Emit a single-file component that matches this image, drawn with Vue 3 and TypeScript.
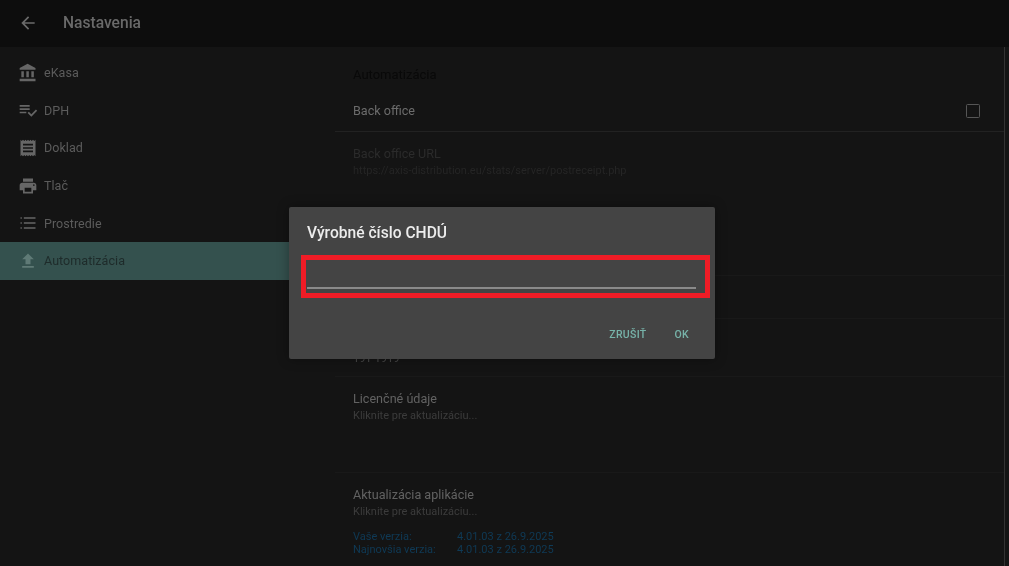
<script setup lang="ts">
interface NavItem { label: string; icon: string; active?: boolean }
const nav: NavItem[] = [
  { label: 'eKasa', icon: 'M4 10v7h3v-7H4zm6 0v7h3v-7h-3zM2 22h19v-3H2v3zm14-12v7h3v-7h-3zm-4.5-9L2 6v2h19V6l-9.5-5z' },
  { label: 'DPH', icon: 'M14 10H2v2h12v-2zm0-4H2v2h12V6zM2 16h8v-2H2v2zm19.5-4.5L23 13l-6.99 7-4.51-4.5L13 14l3.01 3 5.49-5.5z' },
  { label: 'Doklad', icon: 'M18 17H6v-2h12v2zm0-4H6v-2h12v2zm0-4H6V7h12v2zM3 22l1.5-1.5L6 22l1.5-1.5L9 22l1.5-1.5L12 22l1.5-1.5L15 22l1.5-1.5L18 22l1.5-1.5L21 22V2l-1.5 1.5L18 2l-1.5 1.5L15 2l-1.5 1.5L12 2l-1.5 1.5L9 2 7.5 3.5 6 2 4.5 3.5 3 2v20z' },
  { label: 'Tlač', icon: 'M19 8H5c-1.66 0-3 1.34-3 3v6h4v4h12v-4h4v-6c0-1.66-1.34-3-3-3zm-3 11H8v-5h8v5zm3-7c-.55 0-1-.45-1-1s.45-1 1-1 1 .45 1 1-.45 1-1 1zm-1-9H6v4h12V3z' },
  { label: 'Prostredie', icon: 'M3 5.2h1.6v1.6H3zM7 5.2h14v1.6H7zM3 11.2h1.6v1.6H3zM7 11.2h14v1.6H7zM3 17.2h1.6v1.6H3zM7 17.2h14v1.6H7z' },
  { label: 'Automatizácia', icon: 'M9 16h6v-6h4l-7-7-7 7h4zm-4 2h14v2H5z', active: true },
]
const versions = [
  { label: 'Vaše verzia:', value: '4.01.03 z 26.9.2025' },
  { label: 'Najnovšia verzia:', value: '4.01.03 z 26.9.2025' },
]
</script>

<template>
  <div class="screen">
    <header class="appbar">
      <svg class="back" viewBox="0 0 24 24"><path d="M20 11H7.83l5.59-5.59L12 4l-8 8 8 8 1.41-1.41L7.83 13H20v-2z" /></svg>
      <span class="appbar-title">Nastavenia</span>
    </header>

    <div class="body">
      <nav class="sidebar">
        <div v-for="item in nav" :key="item.label" class="nav-item" :class="{ active: item.active }">
          <svg class="nav-icon" viewBox="0 0 24 24"><path :d="item.icon" /></svg>
          <span>{{ item.label }}</span>
        </div>
      </nav>

      <main class="content">
        <div class="section-head">Automatizácia</div>
        <div class="row row-check">
          <span class="title">Back office</span>
          <span class="checkbox"></span>
        </div>
        <div class="row row-url">
          <div class="title disabled">Back office URL</div>
          <div class="sub disabled">https://axis-distribution.eu/stats/server/postreceipt.php</div>
        </div>
        <div class="row row-a"></div>
        <div class="row row-b"></div>
        <div class="row row-serial"><div class="sub serial">191-1919</div></div>
        <div class="row row-license">
          <div class="title">Licenčné údaje</div>
          <div class="sub">Kliknite pre aktualizáciu...</div>
        </div>
        <div class="row-update">
          <div class="title">Aktualizácia aplikácie</div>
          <div class="sub">Kliknite pre aktualizáciu...</div>
          <div class="versions">
            <div v-for="v in versions" :key="v.label" class="version">
              <span class="version-label">{{ v.label }}</span>
              <span>{{ v.value }}</span>
            </div>
          </div>
        </div>
      </main>
      <div class="scrollbar"></div>
    </div>

    <section class="dialog">
      <h2 class="dialog-title">Výrobné číslo CHDÚ</h2>
      <div class="field-mark"><div class="field"></div></div>
      <div class="actions">
        <span class="action">ZRUŠIŤ</span>
        <span class="action">OK</span>
      </div>
    </section>
  </div>
</template>

<style>
html, body { margin: 0; background: #141414; }
</style>

<style scoped>
.screen {
  position: relative;
  width: 1009px;
  height: 566px;
  overflow: hidden;
  background: #141414;
  font-family: Roboto, "Liberation Sans", sans-serif;
  display: flex;
  flex-direction: column;
  filter: blur(0.35px);
}
.appbar {
  height: 47px;
  flex: none;
  background: #0d0d0d;
  display: flex;
  align-items: center;
  padding: 0 0 1px 18px;
  box-sizing: border-box;
}
.back { width: 20px; height: 20px; fill: #6b6b6b; }
.appbar-title { margin-left: 25px; font-size: 15.6px; font-weight: 500; color: #696969; }
.body { flex: 1; display: flex; min-height: 0; }
.sidebar { width: 335px; flex: none; padding-top: 7px; }
.nav-item {
  height: 37.6px;
  display: flex;
  align-items: center;
  padding-left: 18px;
  gap: 6px;
  font-size: 12.5px;
  letter-spacing: 0.05px;
  color: #5c5c5c;
}
.nav-icon { width: 20px; height: 20px; fill: #666; flex: none; }
.nav-item.active { background: #34514e; color: #1e2b2a; }
.nav-item.active .nav-icon { fill: #5f7a76; }
.content { flex: 1; min-width: 0; }
.section-head { height: 46px; padding: 20px 0 0 18px; box-sizing: border-box; font-size: 13px; line-height: 16px; color: #090909; }
.row { box-sizing: border-box; padding-left: 18px; border-bottom: 1px solid #191919; }
.row-check { height: 39px; display: flex; align-items: center; justify-content: space-between; padding: 0 24px 3px 18px; border-bottom-color: #222; }
.row-url { height: 101px; padding-top: 14px; border-bottom: 0; }
.row-url .sub { margin-top: 1px; }
.row-a { height: 43px; }
.row-b { height: 43px; }
.row-serial { height: 58px; padding-top: 32px; }
.row-license { height: 96px; padding-top: 14px; }
.row-update { padding: 14px 0 0 18px; }
.title { font-size: 12.6px; line-height: 16px; color: #626262; }
.row-check .title { color: #6c6c6c; }
.sub { font-size: 11px; line-height: 16px; color: #3c3c3c; }
.row-license .sub, .row-update .sub { margin-top: 1px; }
.title.disabled { color: #2b2b2b; }
.sub.disabled { color: #252525; }
.serial { color: #4a4a4a; }
.checkbox { width: 12px; height: 12px; border: 1.5px solid #565656; border-radius: 1.5px; }
.versions { margin-top: 10px; font-size: 11px; line-height: 13px; color: #0f3a56; }
.version { display: flex; }
.version-label { width: 104px; }
.scrollbar { width: 5px; flex: none; border-left: 1px solid #333; box-sizing: border-box; }
.dialog {
  position: absolute;
  left: 289px;
  top: 207px;
  width: 426px;
  height: 152px;
  box-sizing: border-box;
  background: #444;
  border-radius: 2px;
  box-shadow: 0 0 12px rgba(0, 0, 0, 0.35);
  padding: 16px 5px 0 12px;
  display: flex;
  flex-direction: column;
}
.dialog-title { margin: 1px 0 0 6px; font-size: 15.6px; line-height: 19px; font-weight: 500; color: #ececec; }
.field-mark { margin-top: 12px; height: 43px; box-sizing: border-box; border: 5px solid #f01c26; padding: 0 9px 0 1px; }
.field { height: 27px; border-bottom: 2px solid #8a8a8a; }
.actions { display: flex; justify-content: flex-end; gap: 28px; margin-top: 30px; padding-right: 21px; font-size: 10.5px; font-weight: 500; letter-spacing: 0.3px; color: #77b3a9; line-height: 13px; }
</style>
